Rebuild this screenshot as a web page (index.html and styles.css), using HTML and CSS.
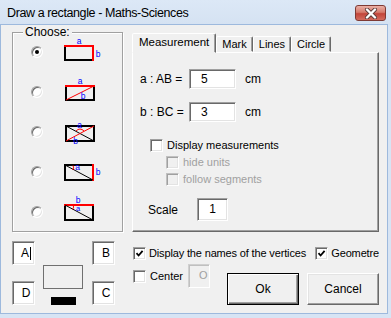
FILE: index.html
```html
<!DOCTYPE html>
<html lang="en">
<head>
    <meta charset="UTF-8">
    <title>Draw a rectangle - Maths-Sciences</title>
    <link rel="stylesheet" href="styles.css">
</head>
<body>

<div class="window">
    <div class="titlebar">
        <span class="title">Draw a rectangle - Maths-Sciences</span>
        <span class="close">
            <svg width="14" height="11" viewBox="0 0 14 11">
                <path d="M3 1.5L11 9.5M11 1.5L3 9.5" stroke="#5a3a38" stroke-width="4" stroke-linecap="round"/>
                <path d="M3 1.5L11 9.5M11 1.5L3 9.5" stroke="#fff" stroke-width="2.4" stroke-linecap="round"/>
            </svg>
        </span>
    </div>

    <div class="client">
        <!-- left column: shape choice + vertex names -->
        <div class="left">
            <div class="group">
                <span class="group-label">Choose:</span>
                <div class="choices">
                    <div class="choice">
                        <span class="radio on"></span>
                        <svg class="shape" width="46" height="28">
                            <path class="k" d="M5 8V22H33"/>
                            <path class="r" d="M5 8H33V22"/>
                            <text x="19" y="5.5">a</text>
                            <text x="38" y="19">b</text>
                        </svg>
                    </div>
                    <div class="choice">
                        <span class="radio"></span>
                        <svg class="shape" width="46" height="28">
                            <path class="k" d="M6 8V22H34V8"/>
                            <path class="r" d="M6 8H34"/>
                            <path class="r thin" d="M6 22L34 8"/>
                            <text x="20" y="5.5">a</text>
                            <text x="23" y="21">b</text>
                        </svg>
                    </div>
                    <div class="choice">
                        <span class="radio"></span>
                        <svg class="shape" width="46" height="28">
                            <path class="k" d="M6 8H34V23H6Z"/>
                            <path class="k thin" d="M6 8L34 23"/>
                            <path class="r thin" d="M6 23L34 8"/>
                            <path class="r thin" d="M16 13Q20 9 24 13"/>
                            <text x="19.5" y="10">a</text>
                            <text x="15.5" y="26">b</text>
                        </svg>
                    </div>
                    <div class="choice">
                        <span class="radio"></span>
                        <svg class="shape" width="46" height="28">
                            <path class="k" d="M33 7H5V22H33"/>
                            <path class="r" d="M33 7V22"/>
                            <path class="k thin" d="M5 7L33 22"/>
                            <path class="r thin" d="M13 7.5Q14.5 10 12.5 12"/>
                            <text x="17.5" y="12">a</text>
                            <text x="38" y="17">b</text>
                        </svg>
                    </div>
                    <div class="choice">
                        <span class="radio"></span>
                        <svg class="shape" width="46" height="28">
                            <path class="k" d="M5 7V22H33V7"/>
                            <path class="r" d="M5 7H33"/>
                            <path class="k thin" d="M5 7L33 22"/>
                            <path class="r thin" d="M13 7Q14.5 9 12.5 11.5"/>
                            <text x="18" y="4.5">b</text>
                            <text x="18" y="12.5" class="small">a</text>
                        </svg>
                    </div>
                </div>
            </div>

            <div class="vertices">
                <span class="field vbox va">A<i class="caret"></i></span>
                <div class="preview">
                    <span class="pframe"></span>
                    <span class="pbar"></span>
                </div>
                <span class="field vbox vb">B</span>
                <span class="field vbox vd">D</span>
                <span class="field vbox vc">C</span>
            </div>
        </div>

        <!-- right column: tabs + options + buttons -->
        <div class="right">
            <div class="tabs">
                <span class="tab active">Measurement</span>
                <span class="tab">Mark</span>
                <span class="tab">Lines</span>
                <span class="tab">Circle</span>
            </div>
            <div class="panel">
                <div class="meas">
                    <span class="lbl">a : AB =</span>
                    <span class="field num">5</span>
                    <span class="unit">cm</span>
                </div>
                <div class="meas">
                    <span class="lbl">b : BC =</span>
                    <span class="field num">3</span>
                    <span class="unit">cm</span>
                </div>
                <label class="check main"><span class="box"></span>Display measurements</label>
                <div class="sub">
                    <label class="check off"><span class="box"></span>hide units</label>
                    <label class="check off"><span class="box"></span>follow segments</label>
                </div>
                <div class="scale">
                    <span>Scale</span>
                    <span class="field scale-val">1</span>
                </div>
            </div>

            <div class="options">
                <label class="check"><span class="box on"><svg width="9" height="9" viewBox="0 0 9 9"><path d="M1.5 4.2L3.6 6.5L7.6 1.8" stroke="#000" stroke-width="1.8" fill="none"/></svg></span>Display the names of the vertices</label>
                <label class="check"><span class="box on"><svg width="9" height="9" viewBox="0 0 9 9"><path d="M1.5 4.2L3.6 6.5L7.6 1.8" stroke="#000" stroke-width="1.8" fill="none"/></svg></span>Geometre</label>
            </div>

            <div class="actions">
                <div class="center-opt">
                    <label class="check"><span class="box"></span>Center</label>
                    <span class="field center-val">O</span>
                </div>
                <div class="buttons">
                    <span class="btn default">Ok</span>
                    <span class="btn">Cancel</span>
                </div>
            </div>
        </div>
    </div>
</div>

</body>
</html>
```

FILE: styles.css
```css
body {
    margin: 0;
    font-family: "Liberation Sans", Arial, sans-serif;
    font-size: 11px;
    color: #000;
}
.window {
    width: 391px;
    height: 318px;
    background: #d7e4f4;
    display: flex;
    flex-direction: column;
}
.titlebar {
    height: 25px;
    display: flex;
    align-items: center;
    padding-left: 7px;
    background: linear-gradient(#dce8f6, #d5e2f2);
}
.title {
    font-size: 12.5px;
    letter-spacing: -0.4px;
    color: #000;
    margin-top: 1px;
}
.close {
    margin-left: auto;
    margin-right: 5px;
    align-self: flex-start;
    margin-top: 5px;
    width: 31px;
    height: 16px;
    box-sizing: border-box;
    border: 1px solid #7e3a34;
    border-radius: 3px;
    background: linear-gradient(#eab0a6, #d57a6c 45%, #c2453a 55%, #d36b5e);
    display: flex;
    align-items: center;
    justify-content: center;
}
.client {
    margin: 0 4px 5px 1px;
    height: 288px;
    box-sizing: border-box;
    background: #f0f0f0;
    box-shadow: 0 0 0 1px #9db9dd;
    display: flex;
    padding: 7px 0 0 11px;
}

/* left column */
.left {
    width: 111px;
}
.group {
    position: relative;
    height: 200px;
    box-sizing: border-box;
    border: 1px solid #a0a0a0;
    box-shadow: inset 1px 1px #fff, 1px 1px #fff;
}
.group-label {
    position: absolute;
    top: -8px;
    left: 10px;
    padding: 0 2px;
    line-height: 14px;
    font-size: 12px;
    background: #f0f0f0;
}
.choices {
    margin-top: -1px;
}
.choice {
    height: 40px;
    display: flex;
    align-items: center;
    padding-left: 18px;
    gap: 17px;
}
.radio {
    width: 12px;
    height: 12px;
    box-sizing: border-box;
    border-radius: 50%;
    border: 1px solid;
    border-color: #a0a0a0 #fff #fff #a0a0a0;
    box-shadow: inset 1px 1px #696969, inset -1px -1px #e3e3e3;
    background: #fff;
    display: flex;
    align-items: center;
    justify-content: center;
}
.radio.on::after {
    content: "";
    width: 4px;
    height: 4px;
    border-radius: 50%;
    background: #000;
}
.shape {
    overflow: visible;
}
.shape path {
    fill: none;
    stroke-width: 2;
    stroke-linecap: square;
}
.shape path.thin {
    stroke-width: 1;
    stroke-linecap: butt;
}
.shape .k { stroke: #000; }
.shape .r { stroke: #f00; }
.shape text {
    font-family: "Liberation Sans", Arial, sans-serif;
    font-size: 8.5px;
    fill: #00f;
    text-anchor: middle;
}
.shape text.small {
    font-size: 7.5px;
}

.field {
    box-sizing: border-box;
    border: 1px solid;
    border-color: #a0a0a0 #fff #fff #a0a0a0;
    box-shadow: inset 1px 1px #696969, inset -1px -1px #e3e3e3;
    background: #fff;
}
.vertices {
    margin-top: 9px;
    width: 103px;
    display: grid;
    grid-template-columns: 23px 1fr 23px;
    grid-template-rows: 24px 16px 24px;
}
.vbox {
    display: flex;
    align-items: center;
    justify-content: center;
    padding-left: 5px;
    font-size: 12px;
}
.va { grid-column: 1; grid-row: 1; }
.vb { grid-column: 3; grid-row: 1; }
.vd { grid-column: 1; grid-row: 3; }
.vc { grid-column: 3; grid-row: 3; }
.caret {
    width: 1px;
    height: 13px;
    background: #000;
    margin-left: 1px;
}
.preview {
    grid-column: 2;
    grid-row: 1 / 4;
    padding: 24px 0 0 8px;
}
.pframe {
    display: block;
    width: 40px;
    height: 24px;
    box-sizing: border-box;
    border: 1px solid #707070;
}
.pbar {
    display: block;
    width: 25px;
    height: 8px;
    margin: 8px 0 0 8px;
    background: #000;
}

/* right column */
.right {
    width: 247px;
    margin-left: 9px;
}
.tabs {
    margin-top: 1px;
    height: 19px;
    display: flex;
    align-items: flex-end;
}
.tab {
    height: 16px;
    box-sizing: border-box;
    padding: 0 5px;
    line-height: 15px;
    border: 1px solid;
    border-color: #fff #696969 transparent #fff;
    border-radius: 2px 2px 0 0;
    box-shadow: inset -1px 0 #a0a0a0;
    background: #f0f0f0;
}
.tab.active {
    position: relative;
    z-index: 1;
    height: 20px;
    margin-bottom: -1px;
    padding: 0 6px;
    line-height: 17px;
    font-size: 11.5px;
}
.panel {
    height: 180px;
    box-sizing: border-box;
    border: 1px solid;
    border-color: #fff #696969 #696969 #fff;
    box-shadow: inset -1px -1px #a0a0a0;
    padding: 16px 0 0 7px;
    display: flex;
    flex-direction: column;
    align-items: flex-start;
}
.meas {
    display: flex;
    align-items: center;
    height: 20px;
    margin-bottom: 13px;
    font-size: 12px;
}
.lbl {
    width: 49px;
}
.num {
    width: 47px;
    height: 20px;
    line-height: 18px;
    padding-left: 11px;
}
.unit {
    margin-left: 9px;
}
.check {
    display: flex;
    align-items: center;
    gap: 4px;
    height: 13px;
    line-height: 13px;
    white-space: nowrap;
    flex-shrink: 0;
}
.box {
    width: 13px;
    height: 13px;
    box-sizing: border-box;
    border: 1px solid;
    border-color: #a0a0a0 #fff #fff #a0a0a0;
    box-shadow: inset 1px 1px #696969, inset -1px -1px #e3e3e3;
    background: #fff;
    display: flex;
    align-items: center;
    justify-content: center;
}
.check.main {
    margin: 4px 0 0 10px;
}
.sub {
    margin: 4px 0 0 26px;
    display: flex;
    flex-direction: column;
    gap: 4px;
}
.check.off {
    color: #a0a0a0;
}
.check.off .box {
    background: #f0f0f0;
    border-color: #c0c0c0 #fff #fff #c0c0c0;
    box-shadow: inset 1px 1px #a0a0a0, inset -1px -1px #e3e3e3;
}
.scale {
    display: flex;
    align-items: center;
    margin: 12px 0 0 8px;
    font-size: 12px;
}
.scale-val {
    margin-left: 19px;
    width: 31px;
    height: 23px;
    line-height: 21px;
    text-align: center;
}

.options {
    display: flex;
    justify-content: space-between;
    margin-top: 15px;
    padding-left: 1px;
    letter-spacing: -0.15px;
}
.options .check {
    gap: 3px;
}
.actions {
    display: flex;
    align-items: flex-start;
    margin-top: 4px;
    padding-left: 1px;
}
.center-opt {
    display: flex;
    align-items: center;
    height: 24px;
}
.center-val {
    margin-left: 5px;
    width: 22px;
    height: 24px;
    line-height: 20px;
    padding-left: 10px;
    color: #a0a0a0;
    background: #f0f0f0;
    border-color: #d0d0d0 #fff #fff #d0d0d0;
    box-shadow: inset 1px 1px #c0c0c0;
}
.buttons {
    margin-left: auto;
    margin-top: 9px;
    display: flex;
    gap: 8px;
}
.btn {
    width: 72px;
    height: 32px;
    box-sizing: border-box;
    display: flex;
    align-items: center;
    justify-content: center;
    font-size: 12px;
    background: #f0f0f0;
    border: 1px solid;
    border-color: #fff #696969 #696969 #fff;
    box-shadow: inset -1px -1px #a0a0a0, inset 1px 1px #e3e3e3;
}
.btn.default {
    border-color: #000;
    box-shadow: inset 1px 1px #fff, inset -1px -1px #696969, inset -2px -2px #a0a0a0;
}
```
